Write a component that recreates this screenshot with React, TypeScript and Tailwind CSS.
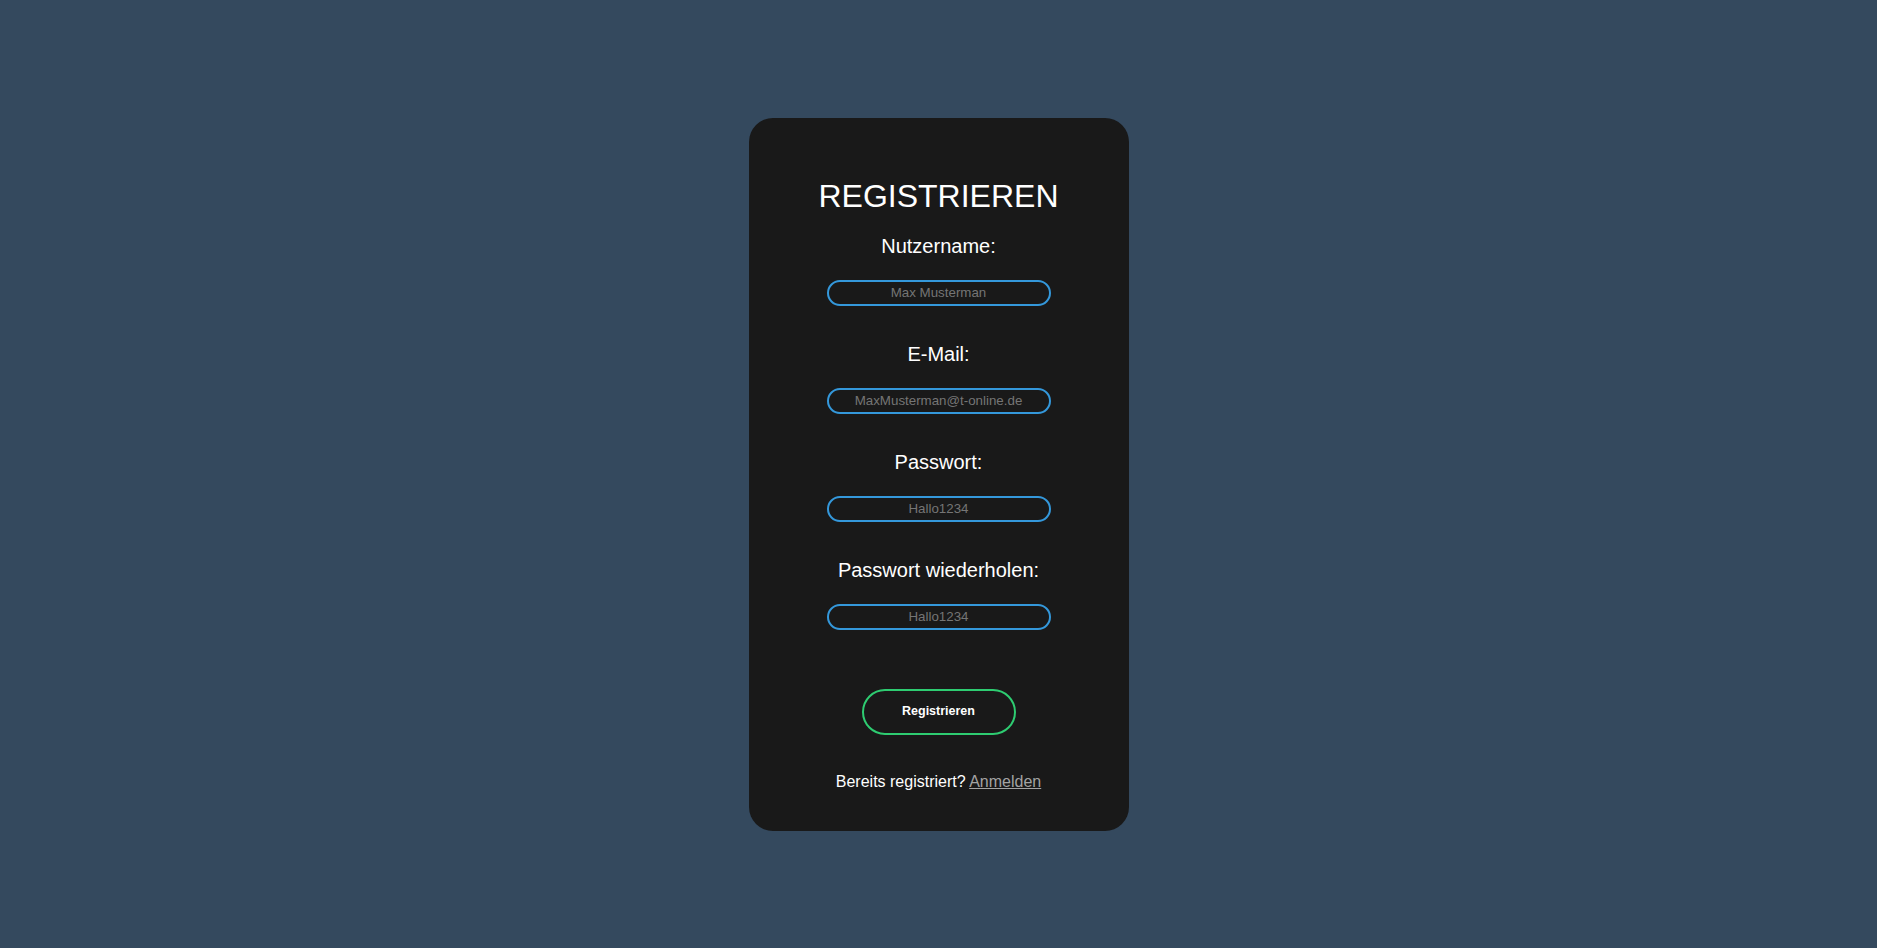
import React from "react";

const fields = [
    { label: "Nutzername:", placeholder: "Max Musterman", type: "text" },
    { label: "E-Mail:", placeholder: "MaxMusterman@t-online.de", type: "email" },
    { label: "Passwort:", placeholder: "Hallo1234", type: "password" },
    { label: "Passwort wiederholen:", placeholder: "Hallo1234", type: "password" },
];

export default function App() {
    return (
        <div className="min-h-screen w-full flex items-center justify-center bg-[#34495e] font-['Liberation_Sans',Arial,sans-serif]">
            <div className="w-[380px] h-[713px] rounded-[24px] bg-[#191919] pt-[60px] flex flex-col items-center text-white">
                <h1 className="text-[32px] leading-[37px] font-normal">REGISTRIEREN</h1>

                <form className="flex flex-col items-center mt-[20px]" onSubmit={(e) => e.preventDefault()}>
                    {fields.map((f, i) => (
                        <div key={i} className={i > 0 ? "flex flex-col items-center mt-[37px]" : "flex flex-col items-center"}>
                            <label className="text-[20px] leading-[23px]">{f.label}</label>
                            <input
                                type={f.type}
                                placeholder={f.placeholder}
                                className="mt-[22px] w-[224px] h-[26px] rounded-full border-2 border-[#3498db] bg-transparent text-center text-[13.33px] text-white placeholder:text-[#757575] outline-none"
                            />
                        </div>
                    ))}

                    <button
                        type="submit"
                        className="mt-[59px] w-[154px] h-[46px] rounded-full border-2 border-[#2ecc71] bg-transparent text-[12.5px] font-bold text-white"
                    >
                        Registrieren
                    </button>
                </form>

                <p className="mt-[37px] text-[16px] leading-[19px]">
                    Bereits registriert?{" "}
                    <a href="#" className="text-[#a3a3a3] underline">
                        Anmelden
                    </a>
                </p>
            </div>
        </div>
    );
}
